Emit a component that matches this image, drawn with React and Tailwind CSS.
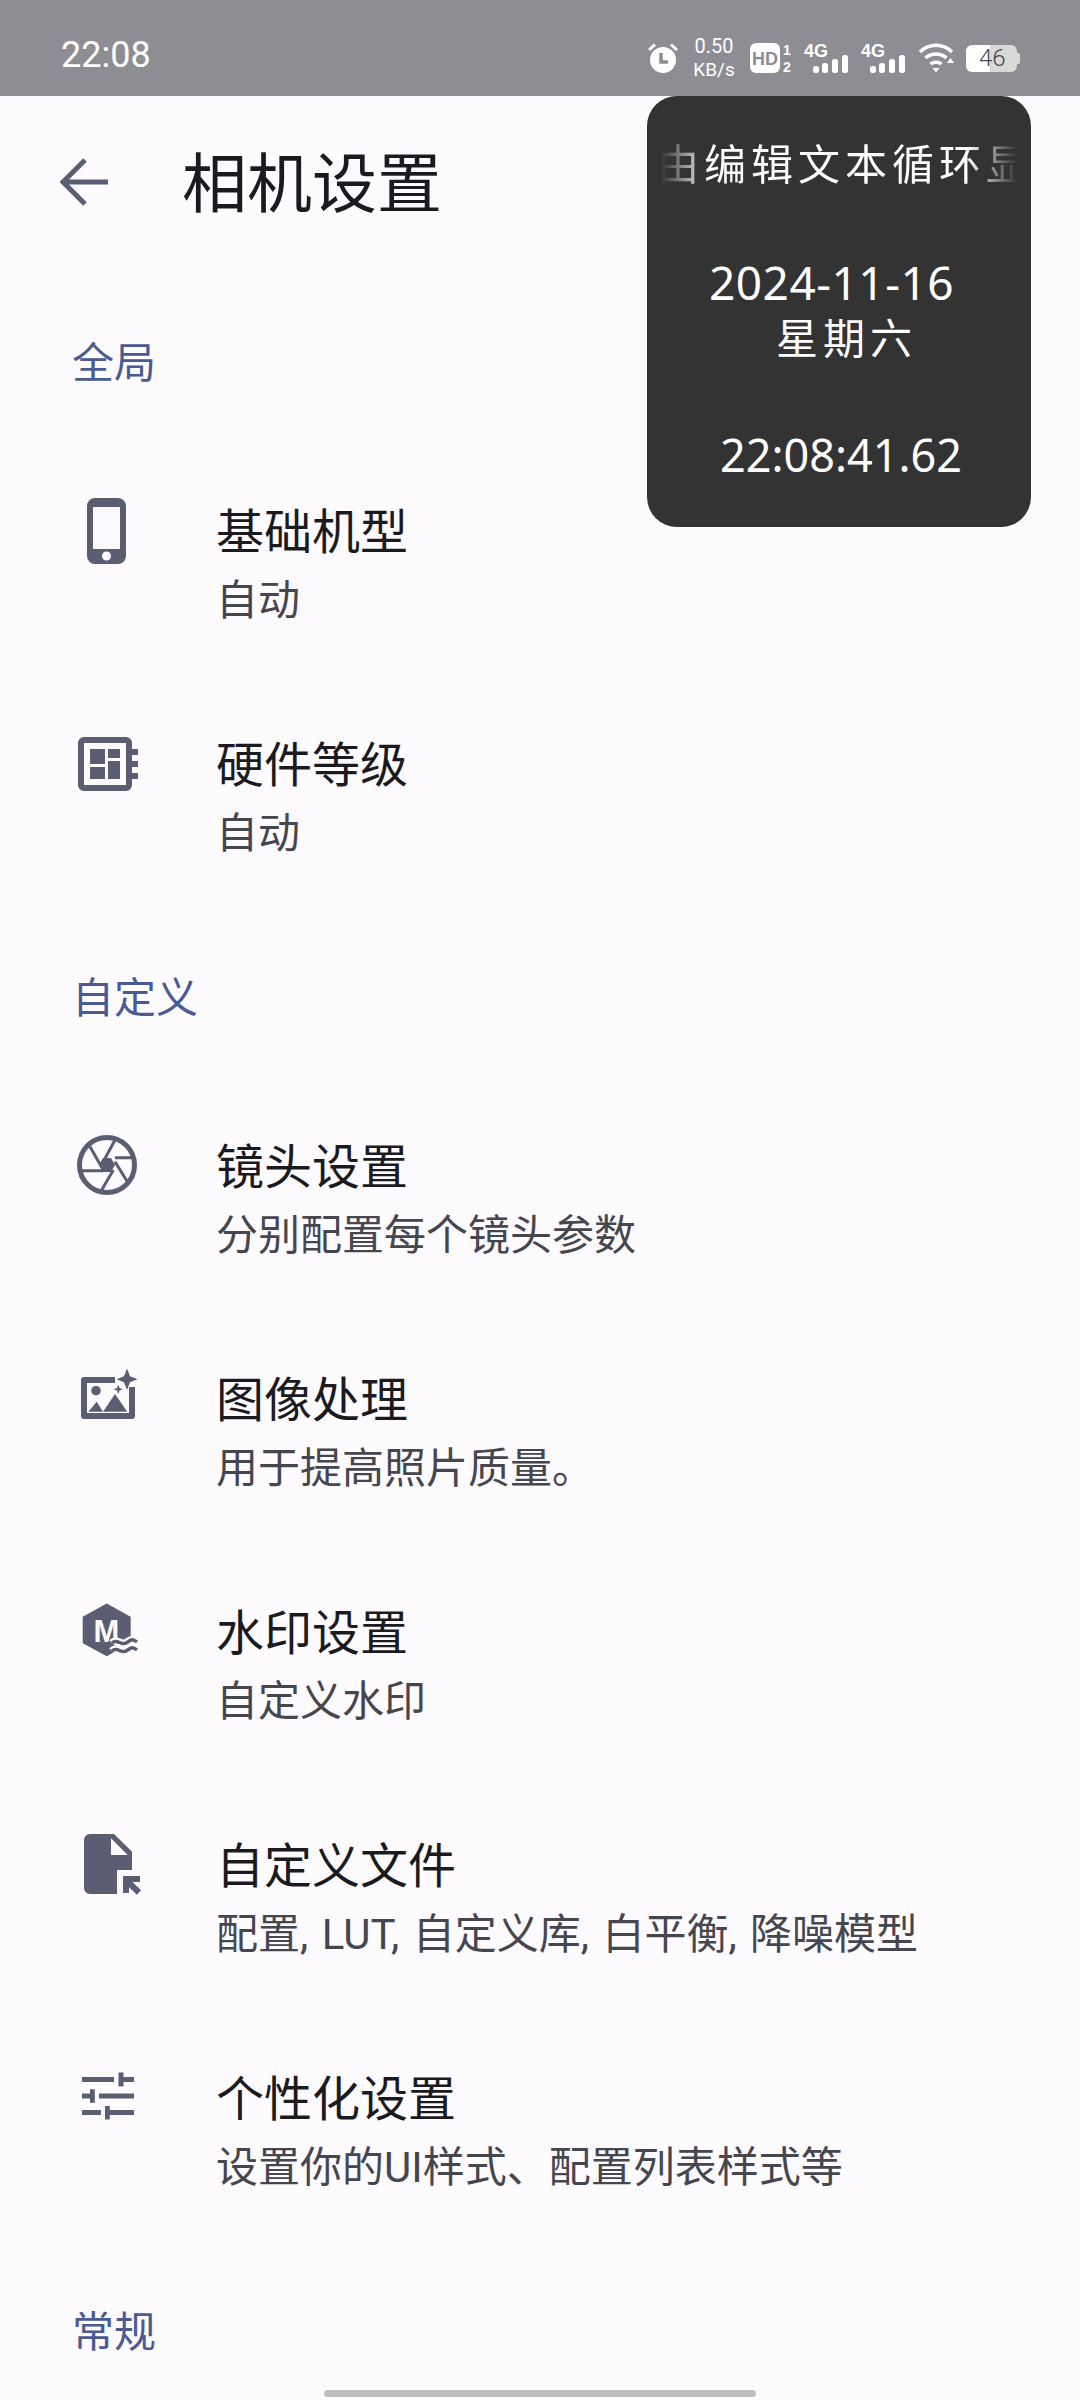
const ICON = "#5b5e72";

function AlarmIcon() {
  return (
    <svg width="30" height="32" viewBox="0 0 30 32">
      <circle cx="15" cy="18" r="13" fill="#fff" />
      <path d="M1 8 L7 2.500 M29 8 L23 2.500" stroke="#fff" strokeWidth="3" />
      <path d="M13 11 V20 H20" stroke="#8e8d93" strokeWidth="3.500" fill="none" />
    </svg>
  );
}

function HdIcon() {
  return (
    <svg className="overflow-visible" width="42" height="30" viewBox="0 0 42 30">
      <rect width="30" height="30" rx="6" fill="#fff" />
      <text x="15" y="21.500" textAnchor="middle" fontFamily="Liberation Sans" fontWeight="700" fontSize="18" fill="#8e8d93">HD</text>
      <text x="37" y="12" textAnchor="middle" fontFamily="Liberation Sans" fontWeight="700" fontSize="14" fill="#fff">1</text>
      <text x="37" y="29" textAnchor="middle" fontFamily="Liberation Sans" fontWeight="700" fontSize="14" fill="#fff">2</text>
    </svg>
  );
}

function SignalIcon() {
  return (
    <svg className="overflow-visible" width="44" height="30" viewBox="0 0 44 30">
      <text x="0" y="14" fontFamily="Liberation Sans" fontWeight="700" fontSize="18" fill="#fff">4G</text>
      <rect x="9" y="23" width="6" height="7" rx="2.500" fill="#fff" />
      <rect x="18" y="20" width="6" height="10" rx="2.500" fill="#fff" />
      <rect x="28" y="16" width="6" height="14" rx="2.500" fill="#fff" />
      <rect x="38" y="12" width="6" height="18" rx="2.500" fill="#fff" />
    </svg>
  );
}

function WifiIcon() {
  return (
    <svg width="36" height="30" viewBox="0 0 36 30">
      <path d="M2 9 C11 0 25 0 34 9" stroke="#fff" strokeWidth="3.500" fill="none" />
      <path d="M7.500 15 C13 9.500 23 9.500 28.500 15" stroke="#fff" strokeWidth="3.500" fill="none" />
      <path d="M12.500 21 C15.500 18.500 20.500 18.500 23.500 21" stroke="#fff" strokeWidth="3.500" fill="none" />
      <path d="M14.500 25 H21.500 L18 29.500 Z" fill="#fff" />
      <path d="M29 20 L32.500 15 L36 20 Z" fill="#fff" />
    </svg>
  );
}

function BatteryIcon() {
  return (
    <div className="relative flex h-[27px] w-[54px] items-center">
      <div className="flex h-[27px] w-[51px] overflow-hidden rounded-[6px]">
        <div className="h-full w-[24px] bg-white" />
        <div className="h-full w-[27px] bg-[#d9d9da]" />
      </div>
      <div className="h-[11px] w-[3px] rounded-r-[2px] bg-[#d9d9da]" />
      <span className="absolute left-[13px] top-0 text-[24px] font-light leading-[27px] text-[#45454a]">46</span>
    </div>
  );
}

const PhoneIcon = (
  <svg width="72" height="72" viewBox="0 0 72 72" fill={ICON}>
    <path fillRule="evenodd" d="M25 3 H48 A8 8 0 0 1 56 11 V61 A8 8 0 0 1 48 69 H25 A8 8 0 0 1 17 61 V11 A8 8 0 0 1 25 3 Z M23 12 V54 H50 V12 Z" />
    <circle cx="36.500" cy="61" r="4.500" fill="#fefbff" />
  </svg>
);

const ChipIcon = (
  <svg width="72" height="72" viewBox="0 0 72 72" fill={ICON}>
    <rect x="11" y="12" width="48" height="48" rx="3" fill="none" stroke={ICON} strokeWidth="6" />
    <rect x="20" y="21" width="15" height="15" />
    <rect x="38" y="21" width="12" height="9" />
    <rect x="38" y="33" width="12" height="18" />
    <rect x="20" y="39" width="15" height="12" />
    <rect x="62" y="21" width="6" height="6" />
    <rect x="62" y="33" width="6" height="6" />
    <rect x="62" y="45" width="6" height="6" />
  </svg>
);

const ApertureIcon = (
  <svg width="72" height="72" viewBox="0 0 72 72">
    <circle cx="37" cy="35" r="27.500" fill="none" stroke={ICON} strokeWidth="5" />
    <path d="M20 16.700 L33.300 40 M45 10 L33.300 31.700 M45 27.700 H65 M45 31.700 L58.300 53.300 M31.700 60 L43.300 40 M11.700 40.700 H33.300" stroke={ICON} strokeWidth="3" fill="none" />
    <path d="M45 35 L41 42 H33 L29 35 L33 28 H41 Z" fill={ICON} />
  </svg>
);

const ImageIcon = (
  <svg width="72" height="72" viewBox="0 0 72 72" fill={ICON}>
    <path d="M45 17 H14 V53 H62 V24" fill="none" stroke={ICON} strokeWidth="6" strokeLinejoin="round" />
    <circle cx="26" cy="27.700" r="4.800" />
    <path d="M18.300 48.700 L26.700 38.700 L33 48.700 Z" />
    <path d="M33 48.700 L45 31 L57.300 48.700 Z" />
    <path d="M57 5.500 L60 13.300 L67.500 16.300 L60 19.300 L57 27 L54 19.300 L46.500 16.300 L54 13.300 Z" />
    <path d="M48.300 21.500 L49.500 25 L53 26.300 L49.500 27.500 L48.300 31 L47 27.500 L43.500 26.300 L47 25 Z" />
  </svg>
);

const WatermarkIcon = (
  <svg width="72" height="72" viewBox="0 0 72 72">
    <path d="M36.700 8.500 L59.700 21.300 V46.500 L36.700 59 L13.700 46.500 V21.300 Z" fill={ICON} stroke={ICON} strokeWidth="2" strokeLinejoin="round" />
    <text x="36.500" y="46" textAnchor="middle" fontFamily="Liberation Sans" fontWeight="700" fontSize="31" fill="#fefbff">M</text>
    <path d="M42 47 C47 42 51 50 56 47 S62 42 67 46 M42 55 C47 50 51 58 56 55 S62 50 67 54" fill="none" stroke="#fefbff" strokeWidth="8" />
    <path d="M42 47 C47 42 51 50 56 47 S62 42 67 46 M42 55 C47 50 51 58 56 55 S62 50 67 54" fill="none" stroke={ICON} strokeWidth="3.500" />
  </svg>
);

const FileIcon = (
  <svg width="72" height="72" viewBox="0 0 72 72" fill={ICON}>
    <path fillRule="evenodd" d="M20 5 H44 L62 22.700 V41 H47 V65 H20 A6 6 0 0 1 14 59 V11 A6 6 0 0 1 20 5 Z M41 9.300 V26 H57.700 Z" />
    <path d="M53 47 H70 V53 H59 V64 H53 Z" />
    <path d="M58 53 L69 63.500" stroke={ICON} strokeWidth="6" />
  </svg>
);

const SlidersIcon = (
  <svg width="72" height="72" viewBox="0 0 72 72" fill={ICON}>
    <rect x="12" y="15" width="32" height="5" />
    <rect x="48.500" y="10.500" width="5" height="14" />
    <rect x="53" y="15" width="11" height="5" />
    <rect x="12" y="31.500" width="8" height="5" />
    <rect x="20" y="27.300" width="4.800" height="13.500" />
    <rect x="29" y="31.500" width="35" height="5" />
    <rect x="12" y="48" width="19" height="5" />
    <rect x="35" y="44" width="4.800" height="13.500" />
    <rect x="39" y="48" width="25" height="5" />
  </svg>
);

function SectionLabel({ children }) {
  return (
    <div className="h-[169px] pl-[72px] pt-[57px] text-[42px] leading-[54px] text-[#4a5a92]">
      {children}
    </div>
  );
}

function SettingRow({ icon, title, sub }) {
  return (
    <div className="flex h-[233px] pl-[70px] pt-[46px]">
      <div className="h-[72px] w-[72px] shrink-0">{icon}</div>
      <div className="ml-[74px] pt-[2px]">
        <div className="text-[48px] leading-[72px] text-[#1b1b1f]">{title}</div>
        <div className="text-[42px] leading-[64px] text-[#46464f] [word-spacing:3px]">{sub}</div>
      </div>
    </div>
  );
}

export default function App() {
  return (
    <div className="relative h-[2400px] w-[1080px] overflow-hidden bg-[#fefbff] font-['Roboto','Noto_Sans_CJK_SC',sans-serif]">

      {/* STATUS BAR */}
      <div className="flex h-[96px] items-center justify-between bg-[#8e8d93] pl-[61px] pr-[60px] pt-[20px]">
        <span className="mb-[6px] text-[36px] leading-[48px] text-white">22:08</span>
        <div className="flex items-center text-white">
          <AlarmIcon />
          <div className="ml-[15px] w-[42px] text-center text-[20px] leading-[24px]">
            <div>0.50</div>
            <div className="text-[19px]">KB/s</div>
          </div>
          <div className="ml-[15px]"><HdIcon /></div>
          <div className="ml-[12px]"><SignalIcon /></div>
          <div className="ml-[13px]"><SignalIcon /></div>
          <div className="ml-[13px]"><WifiIcon /></div>
          <div className="ml-[12px]"><BatteryIcon /></div>
        </div>
      </div>

      {/* HEADER */}
      <div className="flex h-[184px] items-start">
        <div className="flex h-[172px] items-center pl-[60px]">
          <svg width="48" height="48" viewBox="0 0 48 48">
            <path d="M48 24 H4 M25 2 L3 24 L25 46" stroke={ICON} strokeWidth="5" fill="none" />
          </svg>
        </div>
        <div className="ml-[74px] text-[65px] leading-[178px] text-[#1b1b1f]">相机设置</div>
      </div>

      <SectionLabel>全局</SectionLabel>
      <SettingRow icon={PhoneIcon} title="基础机型" sub="自动" />
      <SettingRow icon={ChipIcon} title="硬件等级" sub="自动" />

      <SectionLabel>自定义</SectionLabel>
      <SettingRow icon={ApertureIcon} title="镜头设置" sub="分别配置每个镜头参数" />
      <SettingRow icon={ImageIcon} title="图像处理" sub="用于提高照片质量。" />
      <SettingRow icon={WatermarkIcon} title="水印设置" sub="自定义水印" />
      <SettingRow icon={FileIcon} title="自定义文件" sub="配置, LUT, 自定义库, 白平衡, 降噪模型" />
      <SettingRow icon={SlidersIcon} title="个性化设置" sub="设置你的UI样式、配置列表样式等" />

      <SectionLabel>常规</SectionLabel>

      {/* FLOATING CLOCK WIDGET */}
      <div className="absolute left-[647px] top-[96px] h-[431px] w-[384px] rounded-[30px] bg-[#333333] text-white">
        <div className="mx-[14px] mt-[40px] h-[60px] overflow-hidden whitespace-nowrap text-[42px] leading-[60px] tracking-[5px] [mask-image:linear-gradient(to_right,transparent,black_14%,black_86%,transparent)]">
          <span className="ml-[-4px]">由编辑文本循环显</span>
        </div>
        <div className="ml-[62px] mt-[56px] font-['Noto_Sans','Noto_Sans_CJK_SC',sans-serif] text-[46px] leading-[60px] tracking-[0.5px]">2024-11-16</div>
        <div className="ml-[129px] text-[42px] leading-[56px] tracking-[5px]">星期六</div>
        <div className="ml-[73px] mt-[57px] font-['Noto_Sans','Noto_Sans_CJK_SC',sans-serif] text-[45px] leading-[60px]">22:08:41.62</div>
      </div>

      {/* HOME INDICATOR */}
      <div className="absolute bottom-[3px] left-[324px] h-[7px] w-[432px] rounded-full bg-[#bfbdbf]" />
    </div>
  );
}
